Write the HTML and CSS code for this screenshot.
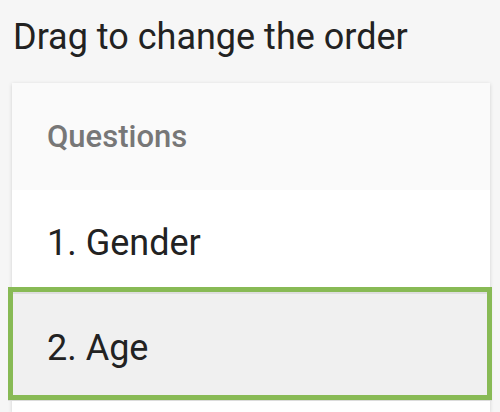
FILE: index.html
```html
<!DOCTYPE html>
<html>
<head>
<meta charset="utf-8">
<link rel="stylesheet" href="styles.css">
</head>
<body>
<div class="page">
  <h1 class="title">Drag to change the order</h1>
  <div class="card">
    <div class="card-header">Questions</div>
    <div class="row">1. Gender</div>
    <div class="row row-dragging"><div class="row-inner">2. Age</div></div>
    <div class="row row-rest"></div>
  </div>
</div>
</body>
</html>
```
FILE: styles.css
```css
html, body {
  margin: 0;
  padding: 0;
  background: #f6f6f6;
  font-family: Roboto, "Noto Sans", sans-serif;
  overflow: hidden;
}
.page {
  padding: 16px 10px 0 12px;
}
.title {
  margin: 0 0 25px 1px;
  font-size: 36px;
  font-weight: 400;
  line-height: 42px;
  color: #222;
}
.card {
  background: #fff;
  box-shadow: 0 1px 4px rgba(0, 0, 0, 0.16);
  width: 478px;
}
.card-header {
  height: 107px;
  display: flex;
  align-items: center;
  padding-left: 35px;
  background: #fafafa;
  font-size: 31px;
  font-weight: 500;
  color: #777;
  line-height: 36px;
}
.row {
  height: 97px;
  box-sizing: border-box;
  display: flex;
  align-items: center;
  padding: 8px 0 0 35px;
  font-size: 36px;
  line-height: 44px;
  color: #222;
}
.row-dragging {
  height: 114px;
  margin: 0 -2px 0 -4px;
  padding: 0;
  border-bottom: 1px solid #dcdcdc;
  display: block;
}
.row-inner {
  box-sizing: border-box;
  height: 113px;
  border: 5px solid #88ba55;
  background: #f0f0f0;
  box-shadow: inset 0 2px 0 #dedede;
  display: flex;
  align-items: center;
  padding: 8px 0 0 34px;
}
.row-rest {
  height: 11px;
  padding: 0;
}
```
